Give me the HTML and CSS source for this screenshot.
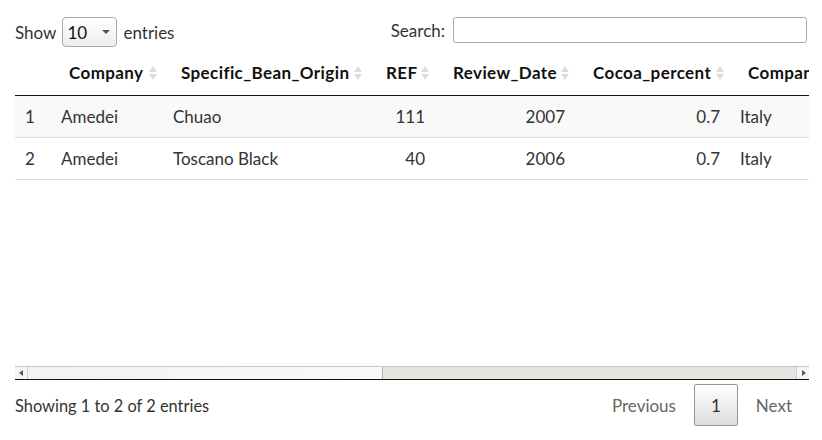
FILE: index.html
```html
<!DOCTYPE html>
<html>
<head>
<meta charset="utf-8">
<link rel="stylesheet" href="styles.css">
</head>
<body>
<div class="wrapper">
  <div class="top">
    <label class="length">Show
      <span class="select"><span class="sel-val">10</span><span class="sel-arrow"></span></span>
      entries</label>
    <label class="search">Search: <span class="search-input"></span></label>
  </div>
  <div class="scroll">
    <div class="scroll-inner">
      <table class="dt">
        <colgroup>
          <col class="c0"><col class="c1"><col class="c2"><col class="c3"><col class="c4"><col class="c5"><col class="c6">
        </colgroup>
        <thead>
          <tr>
            <th class="num-h"></th>
            <th class="sort">Company</th>
            <th class="sort">Specific_Bean_Origin</th>
            <th class="sort">REF</th>
            <th class="sort">Review_Date</th>
            <th class="sort">Cocoa_percent</th>
            <th class="sort">Company_Location</th>
          </tr>
        </thead>
        <tbody>
          <tr class="odd">
            <td>1</td><td>Amedei</td><td>Chuao</td><td class="r">111</td><td class="r">2007</td><td class="r">0.7</td><td>Italy</td>
          </tr>
          <tr class="even">
            <td>2</td><td>Amedei</td><td>Toscano Black</td><td class="r">40</td><td class="r">2006</td><td class="r">0.7</td><td>Italy</td>
          </tr>
        </tbody>
      </table>
    </div>
    <div class="hscroll">
      <span class="sb-btn left"></span>
      <span class="sb-thumb"></span>
      <span class="sb-track"></span>
      <span class="sb-btn right"></span>
    </div>
  </div>
  <div class="bottom">
    <div class="info">Showing 1 to 2 of 2 entries</div>
    <div class="paginate">
      <span class="pbtn disabled">Previous</span>
      <span class="pbtn current">1</span>
      <span class="pbtn disabled">Next</span>
    </div>
  </div>
</div>
</body>
</html>
```
FILE: styles.css
```css
html, body {
  margin: 0;
  padding: 0;
  background: #fff;
}
body {
  font-family: "Lato", "Liberation Sans", sans-serif;
  font-size: 17px;
  color: #333;
}
.wrapper {
  width: 794px;
  margin-left: 15px;
  padding-top: 17px;
}
.top {
  display: flex;
  justify-content: space-between;
  align-items: flex-start;
  height: 39px;
}
.length {
  display: flex;
  align-items: center;
  height: 30px;
  gap: 6px;
}
.select {
  display: inline-flex;
  align-items: center;
  justify-content: space-between;
  box-sizing: border-box;
  width: 55px;
  height: 30px;
  padding: 0 4px 0 4px;
  border: 1px solid #aaa;
  border-radius: 4px;
  background: linear-gradient(#fff, #efedeb);
  color: #111;
}
.sel-arrow {
  width: 0;
  height: 0;
  border-left: 4px solid transparent;
  border-right: 4px solid transparent;
  border-top: 4px solid #555;
  margin-right: 2px;
}
.search {
  display: flex;
  align-items: center;
  height: 26px;
  gap: 8px;
  margin-right: 2px;
}
.search-input {
  display: block;
  box-sizing: border-box;
  width: 354px;
  height: 26px;
  border: 1px solid #aaa;
  border-radius: 3px;
  background: #fff;
}
.scroll {
  border-bottom: 1px solid #111;
  height: 323px;
  display: flex;
  flex-direction: column;
}
.scroll-inner {
  flex: 1;
  overflow: hidden;
}
.dt {
  border-collapse: collapse;
  table-layout: fixed;
  width: 900px;
}
.c0 { width: 36px; }
.c1 { width: 112px; }
.c2 { width: 205px; }
.c3 { width: 67px; }
.c4 { width: 140px; }
.c5 { width: 155px; }
.c6 { width: 185px; }
.dt th {
  text-align: left;
  font-weight: 700;
  letter-spacing: 0.4px;
  color: #111;
  padding: 0 18px 6px 18px;
  height: 33px;
  border-bottom: 1px solid #111;
  white-space: nowrap;
  position: relative;
  overflow: visible;
}
.dt th.sort::before,
.dt th.sort::after {
  content: "";
  position: absolute;
  right: 6px;
  width: 0;
  height: 0;
  border-left: 4px solid transparent;
  border-right: 4px solid transparent;
}
.dt th.sort::before {
  top: 10px;
  border-bottom: 6px solid #dcdcdc;
}
.dt th.sort::after {
  top: 18px;
  border-top: 6px solid #dcdcdc;
}
.dt td {
  padding: 0 10px;
  height: 41px;
  border-bottom: 1px solid #ddd;
  white-space: nowrap;
}
.dt td.r { text-align: right; }
.dt tr.odd td { background: #f9f9f9; }
.dt tr.even td { background: #fff; }
.hscroll {
  display: flex;
  height: 13px;
  background: #e8e6e3;
  border-top: 1px solid #c8c6c4;
  box-sizing: border-box;
}
.sb-btn {
  width: 13px;
  height: 12px;
  background: #f6f5f4;
  position: relative;
}
.sb-btn.left { border-right: 1px solid #d0cecc; box-sizing: border-box; }
.sb-btn.right { border-left: 1px solid #d0cecc; box-sizing: border-box; }
.sb-btn.left::after, .sb-btn.right::after {
  content: "";
  position: absolute;
  top: 3px;
  width: 0;
  height: 0;
  border-top: 3px solid transparent;
  border-bottom: 3px solid transparent;
}
.sb-btn.left::after { left: 4px; border-right: 4px solid #555; }
.sb-btn.right::after { left: 5px; border-left: 4px solid #555; }
.sb-thumb {
  width: 354px;
  background: linear-gradient(to right, #f4f3f2, #faf9f8);
  border-right: 1px solid #b8b6b4;
}
.sb-track {
  flex: 1;
  background: #e6e4e1;
}
.bottom {
  display: flex;
  justify-content: space-between;
  align-items: flex-start;
  padding-top: 4px;
}
.info {
  padding-top: 12px;
  font-size: 16.4px;
}
.paginate {
  display: flex;
  align-items: center;
}
.pbtn {
  box-sizing: border-box;
  height: 42px;
  padding: 0 16px;
  display: flex;
  align-items: center;
  border: 1px solid transparent;
  border-radius: 2px;
  color: #666;
}
.pbtn.current {
  color: #333;
  border-color: #979797;
  background: linear-gradient(#fff, #dcdcdc);
  margin: 0 1px;
  padding: 0 16px;
}
```
